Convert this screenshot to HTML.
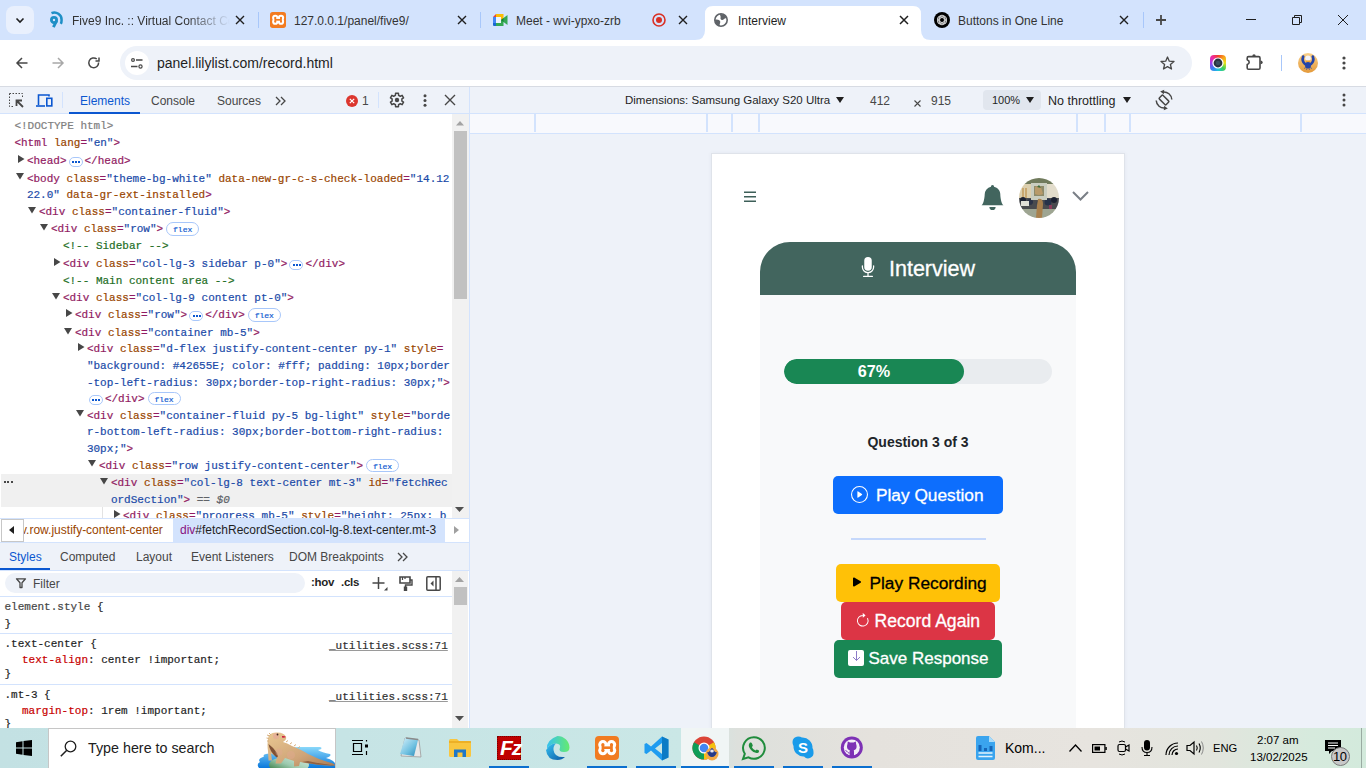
<!DOCTYPE html>
<html><head><meta charset="utf-8">
<style>
*{box-sizing:border-box;margin:0;padding:0}
html,body{width:1366px;height:768px;overflow:hidden;background:#fff;font-family:"Liberation Sans",sans-serif;position:relative}
.a{position:absolute}
.t{position:absolute;white-space:nowrap}
svg{position:absolute;overflow:visible}
/* tab strip */
#tabs{left:0;top:0;width:1366px;height:40px;background:#d3e3fd}
.tt{font-size:12px;color:#333;top:14px}
.sep{position:absolute;width:1px;height:16px;top:12px;background:#a8c7fa}
/* toolbar */
#tb{left:0;top:40px;width:1366px;height:46px;background:#fff;border-radius:8px 8px 0 0}
#omni{left:120px;top:46px;width:1072px;height:34px;border-radius:17px;background:#eef2f9}
#tbline{left:0;top:86px;width:1366px;height:1px;background:#d7dbe3}
/* devtools */
#dtl{left:0;top:87px;width:469px;height:641px;background:#fff}
#dttb{left:0;top:87px;width:469px;height:27px;background:#eef2f9;border-bottom:1px solid #d3e3fd}
#divider{left:469px;top:87px;width:1px;height:641px;background:#d3e3fd}
.dtab{font-size:12px;color:#474747;top:94px}
.code{font-family:"Liberation Mono",monospace;font-size:11px;line-height:17px;color:#881280}
.tag{color:#881280}
.an{color:#994500}
.av{color:#1a1aa6}
.cm{color:#236e25}
.gr{color:#808080}
/* right area */
#dvtb{left:470px;top:87px;width:896px;height:27px;background:#eef2f9;border-bottom:1px solid #d3e3fd}
#ruler{left:470px;top:114px;width:896px;height:20px;background:#f8f9fd;border-bottom:1px solid #d3e3fd}
#emu{left:470px;top:134px;width:896px;height:594px;background:#eef2f9}
#vp{left:711px;top:153px;width:413px;height:575px;background:#fff}
/* taskbar */
#task{left:0;top:728px;width:1366px;height:40px;background:linear-gradient(90deg,#c3e1e3 0%,#c6e4e5 25%,#cae7e6 50%,#dde0dc 54%,#e5e2dd 64%,#e7e4df 80%,#e2e5dd 89%,#d6eadd 96%,#d3eadc 100%)}

.cl{position:absolute;white-space:nowrap;font-family:"Liberation Mono",monospace;font-size:11px;line-height:17px;color:#1f1f1f;-webkit-text-stroke:0.2px currentColor}
.tg{color:#911a62}.an{color:#994500}.av{color:#1a4aa8}.cm{color:#236e25}
.ell{display:inline-block;position:relative;width:14px;height:10px;border:1px solid #a8c7fa;border-radius:5px;margin:0 2px 0 2px;vertical-align:-3px;background:#fff}
.ell i{position:absolute;top:3px;width:2px;height:2px;background:#0b57d0}
.ell i:nth-child(1){left:2.5px}.ell i:nth-child(2){left:5.5px}.ell i:nth-child(3){left:8.5px}
.flx{display:inline-block;width:33px;height:13.5px;border:1px solid #a8c7fa;border-radius:7px;margin-left:3px;vertical-align:0px;font-size:8px;line-height:13px;text-align:center;color:#0b57d0}
</style></head><body>
<div id="tabs" class="a"></div>

<!-- TAB STRIP -->
<div class="a" style="left:6px;top:6px;width:28px;height:28px;border-radius:8px;background:#e9f0fd"></div>
<svg style="left:14px;top:14px" width="12" height="12" viewBox="0 0 12 12"><path d="M2.5 4.5 L6 8 L9.5 4.5" fill="none" stroke="#1f1f1f" stroke-width="1.6"/></svg>
<!-- five9 -->
<svg style="left:50px;top:12px" width="13" height="16" viewBox="0 0 13 16"><path d="M1.5 1.2 A7.2 7.2 0 0 1 11.6 8 Q11.6 10.5 10.8 11.8" fill="none" stroke="#1e8fc6" stroke-width="2.5"/><circle cx="4" cy="8" r="2.6" fill="none" stroke="#1e8fc6" stroke-width="2.8"/><path d="M6.6 8.8 L3.4 15.2" stroke="#1e8fc6" stroke-width="2.8"/></svg>
<div class="t tt" style="left:72px;width:158px;overflow:hidden;-webkit-mask-image:linear-gradient(90deg,#000 72%,transparent 100%)">Five9 Inc. :: Virtual Contact Center</div>
<svg style="left:235px;top:15px" width="10" height="10" viewBox="0 0 10 10"><path d="M1 1L9 9M9 1L1 9" stroke="#1f1f1f" stroke-width="1.4"/></svg>
<div class="sep" style="left:258px"></div>
<!-- xampp -->
<svg style="left:270px;top:12px" width="16" height="16" viewBox="0 0 24 24"><rect x="0" y="0" width="24" height="24" rx="4" fill="#f37b20"/><g fill="#fff"><circle cx="7.9" cy="8.7" r="4.7"/><circle cx="16.5" cy="8.7" r="4.7"/><circle cx="7.9" cy="14.6" r="4.7"/><circle cx="16.5" cy="14.6" r="4.7"/><rect x="8" y="9" width="8.5" height="5.5"/></g><g fill="#f37b20"><circle cx="7.9" cy="8.7" r="1.6"/><circle cx="16.5" cy="8.7" r="1.6"/><circle cx="7.9" cy="14.6" r="1.6"/><circle cx="16.5" cy="14.6" r="1.6"/><rect x="6.6" y="8.7" width="2.6" height="5.9"/><rect x="15.2" y="8.7" width="2.6" height="5.9"/><rect x="7.9" y="10.4" width="8.6" height="2.6"/></g></svg>
<div class="t tt" style="left:294px">127.0.0.1/panel/five9/</div>
<svg style="left:457px;top:15px" width="10" height="10" viewBox="0 0 10 10"><path d="M1 1L9 9M9 1L1 9" stroke="#1f1f1f" stroke-width="1.4"/></svg>
<div class="sep" style="left:480px"></div>
<!-- meet -->
<svg style="left:493px;top:14px" width="15" height="12" viewBox="0 0 15 12">
<path d="M0 3 L3 0 L3 3Z" fill="#ea4335"/>
<rect x="3" y="0" width="7.5" height="3" fill="#fbbc04"/>
<path d="M8 3 L10.5 3 L10.5 6 L8 7.5Z" fill="#fbbc04"/>
<rect x="0" y="3" width="3" height="6" fill="#4285f4"/>
<path d="M0 9 L3 9 L3 12 L1 12 Q0 12 0 11Z" fill="#1967d2"/>
<rect x="3" y="9" width="7.5" height="3" fill="#34a853"/>
<path d="M8 6 L10.5 4 L14.5 1 L14.5 11 L10.5 8 L10.5 9 L8 9Z" fill="#34a853"/>
<path d="M8 6 L10.5 4 L10.5 8Z" fill="#188038"/>
<rect x="3" y="3" width="5" height="6" fill="#eef3fd"/>
</svg>
<div class="t tt" style="left:516px">Meet - wvi-ypxo-zrb</div>
<svg style="left:652px;top:13px" width="14" height="14" viewBox="0 0 14 14"><circle cx="7" cy="7" r="6" fill="none" stroke="#d93025" stroke-width="1.6"/><circle cx="7" cy="7" r="3" fill="#d93025"/></svg>
<svg style="left:678px;top:15px" width="10" height="10" viewBox="0 0 10 10"><path d="M1 1L9 9M9 1L1 9" stroke="#1f1f1f" stroke-width="1.4"/></svg>
<!-- active tab -->
<svg style="left:695px;top:6px" width="236" height="34" viewBox="0 0 236 34"><path d="M0 34 Q10 34 10 24 L10 8 Q10 0 18 0 L218 0 Q226 0 226 8 L226 24 Q226 34 236 34Z" fill="#fff"/></svg>
<svg style="left:714px;top:13px" width="14" height="14" viewBox="0 0 14 14"><circle cx="7" cy="7" r="6.2" fill="none" stroke="#5f6368" stroke-width="1.6"/><path d="M5.5 1.2 Q10 0.5 12.2 4 Q12 6 10.2 5.8 Q9 7.5 7.3 6.8 Q6 6 6.6 4.3 Q7 3 5.5 1.2Z" fill="#5f6368"/><path d="M0.9 6.8 Q3 6 5 7 Q6.8 8 6.2 9.8 Q5.2 11 6 13 Q1.5 12.5 0.9 6.8Z" fill="#5f6368"/></svg>
<div class="t tt" style="left:738px;color:#1f1f1f">Interview</div>
<svg style="left:899px;top:15px" width="10" height="10" viewBox="0 0 10 10"><path d="M1 1L9 9M9 1L1 9" stroke="#1f1f1f" stroke-width="1.5"/></svg>
<!-- openai tab -->
<svg style="left:934px;top:12px" width="16" height="16" viewBox="0 0 16 16"><circle cx="8" cy="8" r="8" fill="#000"/><g fill="none" stroke="#c8c8c8" stroke-width="1.1"><rect x="5.6" y="3.3" width="4.8" height="9.4" rx="2.4"/><rect x="5.6" y="3.3" width="4.8" height="9.4" rx="2.4" transform="rotate(60 8 8)"/><rect x="5.6" y="3.3" width="4.8" height="9.4" rx="2.4" transform="rotate(120 8 8)"/></g><circle cx="8" cy="8" r="1" fill="#000"/></svg>
<div class="t tt" style="left:958px">Buttons in One Line</div>
<svg style="left:1119px;top:15px" width="10" height="10" viewBox="0 0 10 10"><path d="M1 1L9 9M9 1L1 9" stroke="#1f1f1f" stroke-width="1.4"/></svg>
<div class="sep" style="left:1143px"></div>
<svg style="left:1156px;top:15px" width="10" height="10" viewBox="0 0 10 10"><path d="M5 0V10M0 5H10" stroke="#474747" stroke-width="1.8"/></svg>
<svg style="left:1246px;top:19px" width="10" height="2" viewBox="0 0 10 2"><path d="M0 .5H10" stroke="#1f1f1f" stroke-width="1"/></svg>
<svg style="left:1292px;top:15px" width="10" height="10" viewBox="0 0 10 10"><path d="M.5 2.5H7.5V9.5H.5Z M2.5 2.5V.5H9.5V7.5H7.5" fill="none" stroke="#1f1f1f" stroke-width="1"/></svg>
<svg style="left:1338px;top:15px" width="10" height="10" viewBox="0 0 10 10"><path d="M0 0L10 10M10 0L0 10" stroke="#1f1f1f" stroke-width="1"/></svg>
<div id="tb" class="a"></div>
<div id="omni" class="a"></div>

<!-- TOOLBAR CONTENT -->
<svg style="left:16px;top:57px" width="12" height="12" viewBox="0 0 12 12"><path d="M11.5 6H1.2M6 1L1 6L6 11" fill="none" stroke="#474747" stroke-width="1.5"/></svg>
<svg style="left:52px;top:57px" width="12" height="12" viewBox="0 0 12 12"><path d="M.5 6H10.8M6 1L11 6L6 11" fill="none" stroke="#a8a8a8" stroke-width="1.5"/></svg>
<svg style="left:88px;top:57px" width="12" height="12" viewBox="0 0 12 12"><path d="M10.6 5.5 A4.9 4.9 0 1 1 8.8 2" fill="none" stroke="#474747" stroke-width="1.5"/><path d="M7.5 1.5H11V-2" fill="none" stroke="#474747" stroke-width="1.5" transform="translate(0,2.5)"/></svg>
<div class="a" style="left:125px;top:51px;width:24px;height:24px;border-radius:12px;background:#fff"></div>
<svg style="left:131px;top:58px" width="12" height="11" viewBox="0 0 12 11"><circle cx="2" cy="2" r="1.4" fill="none" stroke="#474747" stroke-width="1.2"/><path d="M5 2H11.5M0 8.5H6.5" stroke="#474747" stroke-width="1.3"/><circle cx="9.5" cy="8.5" r="1.6" fill="none" stroke="#474747" stroke-width="1.2"/></svg>
<div class="t" style="left:157px;top:55px;font-size:14px;color:#1f1f1f">panel.lilylist.com/record.html</div>
<svg style="left:1160px;top:56px" width="15" height="14" viewBox="0 0 15 14"><path d="M7.5 1 L9.3 5.2 L14 5.5 L10.4 8.5 L11.5 13 L7.5 10.6 L3.5 13 L4.6 8.5 L1 5.5 L5.7 5.2Z" fill="none" stroke="#474747" stroke-width="1.3" stroke-linejoin="round"/></svg>
<div class="a" style="left:1210px;top:55px;width:16px;height:16px;border-radius:4px;background:conic-gradient(from 0deg,#f0402a,#f7a21b,#e8e21a,#3ccf5a,#1ec6e0,#3a7df0,#a23cf0,#f02aa0,#f0402a)"></div><svg style="left:1210px;top:55px" width="16" height="16" viewBox="0 0 16 16"><circle cx="8" cy="8" r="5.6" fill="#fff"/><circle cx="8" cy="8" r="4.4" fill="#2b3440"/><circle cx="8" cy="8" r="2.2" fill="#3a5060"/></svg>
<svg style="left:1246px;top:54px" width="18" height="17" viewBox="0 0 18 17"><path d="M2.5 2.6 H12.7 Q14 2.6 14 3.9 V14 Q14 15.3 12.7 15.3 H2.5 Q1.2 15.3 1.2 14 V10.6 Q3.2 9.8 3.2 8.2 Q3.2 6.6 1.2 5.8 V3.9 Q1.2 2.6 2.5 2.6Z" fill="none" stroke="#474747" stroke-width="1.6" stroke-linejoin="round"/><path d="M6.3 2.2 Q6.3 0.2 8 0.2 Q9.7 0.2 9.7 2.2Z" fill="#474747"/><path d="M14.5 6.6 Q16.7 6.6 16.7 8.4 Q16.7 10.2 14.5 10.2Z" fill="#474747"/></svg>
<div class="a" style="left:1281px;top:55px;width:1px;height:16px;background:#a8c7fa"></div>
<svg style="left:1298px;top:53px" width="20" height="20" viewBox="0 0 20 20"><defs><linearGradient id="avo" x1="0" y1="0" x2="0" y2="1"><stop offset="0" stop-color="#f9d08a"/><stop offset="1" stop-color="#e49a3a"/></linearGradient></defs><circle cx="10" cy="10" r="10" fill="url(#avo)"/><path d="M5.2 3.5 Q3.5 8 7 11 M14.8 3.5 Q16.5 8 13 11" fill="none" stroke="#2444a8" stroke-width="2.6" stroke-linecap="round"/><ellipse cx="10" cy="5.2" rx="2.8" ry="2.6" fill="#f4f4f8"/><path d="M7.8 7.6 H12.2 L12 9.2 H8Z" fill="#f0a030"/><ellipse cx="10" cy="12.2" rx="3" ry="3.2" fill="#2444a8"/><path d="M7.5 14 L6.5 16 M12.5 14 L13.5 16 M9 15 L8.5 17 M11 15 L11.5 17" stroke="#2444a8" stroke-width=".6"/></svg>
<svg style="left:1342px;top:56px" width="4" height="14" viewBox="0 0 4 14"><circle cx="2" cy="2" r="1.6" fill="#474747"/><circle cx="2" cy="7" r="1.6" fill="#474747"/><circle cx="2" cy="12" r="1.6" fill="#474747"/></svg>
<div id="tbline" class="a"></div>
<div id="dtl" class="a"></div>
<div id="dttb" class="a"></div>
<!-- DOM TREE -->
<div class="a" style="left:0;top:115px;width:452px;height:403px;overflow:hidden">
<div class="a" style="left:1px;top:359px;width:451px;height:33px;background:#f0f0f0"></div>
<div class="a" style="left:3.5px;top:366px;width:2px;height:2px;background:#474747"></div><div class="a" style="left:7px;top:366px;width:2px;height:2px;background:#474747"></div><div class="a" style="left:10.5px;top:366px;width:2px;height:2px;background:#474747"></div>
<div class="a" style="left:102px;top:392px;width:1px;height:11px;background:#e3e3e3"></div>
<div class="cl" style="left:14.4px;top:3.1px"><span style="color:#808080">&lt;!DOCTYPE html&gt;</span></div>
<div class="cl" style="left:14.4px;top:20.1px"><span class="tg">&lt;html</span> <span class="an">lang</span><span class="tg">=</span><span class="av">&quot;en&quot;</span><span class="tg">&gt;</span></div>
<div class="cl" style="left:26.9px;top:37.9px"><span class="tg">&lt;head&gt;</span><span class="ell"><i></i><i></i><i></i></span><span class="tg">&lt;/head&gt;</span></div>
<svg style="left:17.9px;top:39.8px" width="7" height="8" viewBox="0 0 7 8"><path d="M0 0L6.5 4L0 8Z" fill="#474747"/></svg>
<div class="cl" style="left:26.9px;top:55.5px"><span class="tg">&lt;body</span> <span class="an">class</span><span class="tg">=</span><span class="av">&quot;theme-bg-white&quot;</span> <span class="an">data-new-gr-c-s-check-loaded</span><span class="tg">=</span><span class="av">&quot;14.12</span></div>
<svg style="left:16.3px;top:57.9px" width="8" height="7" viewBox="0 0 8 7"><path d="M0 0H8L4 6.5Z" fill="#474747"/></svg>
<div class="cl" style="left:26.9px;top:71.6px"><span class="av">22.0&quot;</span> <span class="an">data-gr-ext-installed</span><span class="tg">&gt;</span></div>
<div class="cl" style="left:38.9px;top:89.1px"><span class="tg">&lt;div</span> <span class="an">class</span><span class="tg">=</span><span class="av">&quot;container-fluid&quot;</span><span class="tg">&gt;</span></div>
<svg style="left:28.3px;top:91.5px" width="8" height="7" viewBox="0 0 8 7"><path d="M0 0H8L4 6.5Z" fill="#474747"/></svg>
<div class="cl" style="left:50.9px;top:106.1px"><span class="tg">&lt;div</span> <span class="an">class</span><span class="tg">=</span><span class="av">&quot;row&quot;</span><span class="tg">&gt;</span><span class="flx">flex</span></div>
<svg style="left:40.3px;top:108.5px" width="8" height="7" viewBox="0 0 8 7"><path d="M0 0H8L4 6.5Z" fill="#474747"/></svg>
<div class="cl" style="left:62.9px;top:123.3px"><span class="cm">&lt;!-- Sidebar --&gt;</span></div>
<div class="cl" style="left:62.9px;top:141.0px"><span class="tg">&lt;div</span> <span class="an">class</span><span class="tg">=</span><span class="av">&quot;col-lg-3 sidebar p-0&quot;</span><span class="tg">&gt;</span><span class="ell"><i></i><i></i><i></i></span><span class="tg">&lt;/div&gt;</span></div>
<svg style="left:53.9px;top:142.9px" width="7" height="8" viewBox="0 0 7 8"><path d="M0 0L6.5 4L0 8Z" fill="#474747"/></svg>
<div class="cl" style="left:62.9px;top:158.1px"><span class="cm">&lt;!-- Main content area --&gt;</span></div>
<div class="cl" style="left:62.9px;top:175.1px"><span class="tg">&lt;div</span> <span class="an">class</span><span class="tg">=</span><span class="av">&quot;col-lg-9 content pt-0&quot;</span><span class="tg">&gt;</span></div>
<svg style="left:52.3px;top:177.5px" width="8" height="7" viewBox="0 0 8 7"><path d="M0 0H8L4 6.5Z" fill="#474747"/></svg>
<div class="cl" style="left:74.9px;top:192.4px"><span class="tg">&lt;div</span> <span class="an">class</span><span class="tg">=</span><span class="av">&quot;row&quot;</span><span class="tg">&gt;</span><span class="ell"><i></i><i></i><i></i></span><span class="tg">&lt;/div&gt;</span><span class="flx">flex</span></div>
<svg style="left:65.9px;top:194.3px" width="7" height="8" viewBox="0 0 7 8"><path d="M0 0L6.5 4L0 8Z" fill="#474747"/></svg>
<div class="cl" style="left:74.9px;top:210.1px"><span class="tg">&lt;div</span> <span class="an">class</span><span class="tg">=</span><span class="av">&quot;container mb-5&quot;</span><span class="tg">&gt;</span></div>
<svg style="left:64.3px;top:212.5px" width="8" height="7" viewBox="0 0 8 7"><path d="M0 0H8L4 6.5Z" fill="#474747"/></svg>
<div class="cl" style="left:86.9px;top:226.3px"><span class="tg">&lt;div</span> <span class="an">class</span><span class="tg">=</span><span class="av">&quot;d-flex justify-content-center py-1&quot;</span> <span class="an">style</span><span class="tg">=</span></div>
<svg style="left:77.9px;top:228.2px" width="7" height="8" viewBox="0 0 7 8"><path d="M0 0L6.5 4L0 8Z" fill="#474747"/></svg>
<div class="cl" style="left:86.9px;top:242.7px"><span class="av">&quot;background: #42655E; color: #fff; padding: 10px;border</span></div>
<div class="cl" style="left:86.9px;top:259.9px"><span class="av">-top-left-radius: 30px;border-top-right-radius: 30px;&quot;</span><span class="tg">&gt;</span></div>
<div class="cl" style="left:86.9px;top:275.5px"><span class="ell"><i></i><i></i><i></i></span><span class="tg">&lt;/div&gt;</span><span class="flx">flex</span></div>
<div class="cl" style="left:86.9px;top:292.7px"><span class="tg">&lt;div</span> <span class="an">class</span><span class="tg">=</span><span class="av">&quot;container-fluid py-5 bg-light&quot;</span> <span class="an">style</span><span class="tg">=</span><span class="av">&quot;borde</span></div>
<svg style="left:76.3px;top:295.1px" width="8" height="7" viewBox="0 0 8 7"><path d="M0 0H8L4 6.5Z" fill="#474747"/></svg>
<div class="cl" style="left:86.9px;top:309.1px"><span class="av">r-bottom-left-radius: 30px;border-bottom-right-radius:</span></div>
<div class="cl" style="left:86.9px;top:325.5px"><span class="av">30px;&quot;</span><span class="tg">&gt;</span></div>
<div class="cl" style="left:98.9px;top:342.9px"><span class="tg">&lt;div</span> <span class="an">class</span><span class="tg">=</span><span class="av">&quot;row justify-content-center&quot;</span><span class="tg">&gt;</span><span class="flx">flex</span></div>
<svg style="left:88.3px;top:345.3px" width="8" height="7" viewBox="0 0 8 7"><path d="M0 0H8L4 6.5Z" fill="#474747"/></svg>
<div class="cl" style="left:110.9px;top:360.1px"><span class="tg">&lt;div</span> <span class="an">class</span><span class="tg">=</span><span class="av">&quot;col-lg-8 text-center mt-3&quot;</span> <span class="an">id</span><span class="tg">=</span><span class="av">&quot;fetchRec</span></div>
<svg style="left:100.3px;top:362.5px" width="8" height="7" viewBox="0 0 8 7"><path d="M0 0H8L4 6.5Z" fill="#474747"/></svg>
<div class="cl" style="left:110.9px;top:376.6px"><span class="av">ordSection&quot;</span><span class="tg">&gt;</span> <span style="color:#5f6368;font-style:italic">== $0</span></div>
<div class="cl" style="left:122.9px;top:392.9px"><span class="tg">&lt;div</span> <span class="an">class</span><span class="tg">=</span><span class="av">&quot;progress mb-5&quot;</span> <span class="an">style</span><span class="tg">=</span><span class="av">&quot;height: 25px; b</span></div>
<svg style="left:113.9px;top:394.8px" width="7" height="8" viewBox="0 0 7 8"><path d="M0 0L6.5 4L0 8Z" fill="#474747"/></svg>

</div>
<!-- dom scrollbar -->
<div class="a" style="left:452px;top:114px;width:17px;height:404px;background:#f1f1f1"></div>
<svg style="left:456px;top:121px" width="8" height="5" viewBox="0 0 8 5"><path d="M0 4.5H8L4 0Z" fill="#a3a3a3"/></svg>
<div class="a" style="left:454px;top:131px;width:13px;height:168px;background:#c1c1c1"></div>
<svg style="left:455px;top:507px" width="9" height="6" viewBox="0 0 9 6"><path d="M0 0H9L4.5 5Z" fill="#505050"/></svg>


<!-- BREADCRUMB -->
<div class="a" style="left:0;top:518px;width:469px;height:1px;background:#d3e3fd"></div>
<div class="a" style="left:0;top:519px;width:469px;height:23px;background:#fff"></div>
<div class="a" style="left:1px;top:519px;width:23px;height:23px;border:1px solid #c7c7c7;background:#fff"></div>
<svg style="left:9px;top:526px" width="5" height="8" viewBox="0 0 5 8"><path d="M5 0V8L0 4Z" fill="#1f1f1f"/></svg>
<div class="a" style="left:24px;top:519px;width:149px;height:23px;overflow:hidden">
<div class="t" style="left:-3px;top:4px;font-size:12px;color:#994500">v.row.justify-content-center</div>
</div>
<div class="a" style="left:173px;top:519px;width:272px;height:23px;background:#d3e3fd"></div>
<div class="t" style="left:180px;top:523px;font-size:12px;color:#1f1f1f"><span style="color:#881280">div</span>#fetchRecordSection.col-lg-8.text-center.mt-3</div>
<div class="a" style="left:445px;top:519px;width:23px;height:23px;background:#fff"></div>
<svg style="left:454px;top:526px" width="5" height="8" viewBox="0 0 5 8"><path d="M0 0V8L5 4Z" fill="#a0a0a0"/></svg>
<div class="a" style="left:0;top:542px;width:469px;height:1px;background:#d3e3fd"></div>
<!-- STYLES TABS -->
<div class="a" style="left:0;top:543px;width:469px;height:27px;background:#eef2f9"></div>
<div class="t dtab" style="left:9px;top:550px;color:#0b57d0">Styles</div>
<div class="a" style="left:0;top:568px;width:50px;height:2px;background:#0b57d0"></div>
<div class="t dtab" style="left:60px;top:550px">Computed</div>
<div class="t dtab" style="left:136px;top:550px">Layout</div>
<div class="t dtab" style="left:191px;top:550px">Event Listeners</div>
<div class="t dtab" style="left:289px;top:550px">DOM Breakpoints</div>
<svg style="left:397px;top:552px" width="12" height="10" viewBox="0 0 12 10"><path d="M1 1L5 5L1 9M6 1L10 5L6 9" fill="none" stroke="#474747" stroke-width="1.3"/></svg>
<div class="a" style="left:0;top:570px;width:469px;height:1px;background:#d3e3fd"></div>
<!-- FILTER -->
<div class="a" style="left:5px;top:573px;width:300px;height:20px;border-radius:10px;background:#eef2f9"></div>
<svg style="left:16px;top:578px" width="10" height="10" viewBox="0 0 10 10"><path d="M.5 .8H9.5L6 4.8V9.5H4V4.8Z" fill="none" stroke="#474747" stroke-width="1.3" stroke-linejoin="round"/></svg>
<div class="t" style="left:33px;top:577px;font-size:12px;color:#474747">Filter</div>
<div class="t" style="left:311px;top:576px;font-size:11.5px;color:#1f1f1f;font-weight:bold;letter-spacing:-0.3px">:hov</div>
<div class="t" style="left:341px;top:576px;font-size:11.5px;color:#1f1f1f;font-weight:bold;letter-spacing:-0.3px">.cls</div>
<svg style="left:372px;top:576px" width="17" height="15" viewBox="0 0 17 15"><path d="M6.5 1V13M.5 7H12.5" stroke="#474747" stroke-width="1.5"/><path d="M15.5 11V14.5H12Z" fill="#474747"/></svg>
<svg style="left:399px;top:576px" width="14" height="15" viewBox="0 0 14 15"><path d="M1 1H11V7H1Z" fill="none" stroke="#474747" stroke-width="1.6"/><path d="M3.5 1V4M6 1V3" stroke="#474747" stroke-width="1.2"/><path d="M11 4H13V9H6.5V11" fill="none" stroke="#474747" stroke-width="1.4"/><rect x="4.8" y="10.5" width="3.4" height="4.5" fill="#474747"/></svg>
<svg style="left:426px;top:576px" width="15" height="15" viewBox="0 0 15 15"><rect x=".8" y=".8" width="13.4" height="13.4" rx="1" fill="none" stroke="#474747" stroke-width="1.5"/><path d="M10 1V14" stroke="#474747" stroke-width="1.5"/><path d="M7.5 4.5V10.5L4.5 7.5Z" fill="#474747"/></svg>
<div class="a" style="left:452px;top:571px;width:16px;height:157px;background:#f1f1f1"></div>
<svg style="left:455px;top:577px" width="9" height="6" viewBox="0 0 9 6"><path d="M0 5H9L4.5 0Z" fill="#a3a3a3"/></svg>
<div class="a" style="left:454px;top:587px;width:13px;height:18px;background:#c1c1c1"></div>
<svg style="left:455px;top:716px" width="9" height="6" viewBox="0 0 9 6"><path d="M0 0H9L4.5 5Z" fill="#505050"/></svg>
<div class="a" style="left:0;top:596px;width:452px;height:1px;background:#d3e3fd"></div>
<!-- STYLES CONTENT -->
<div class="cl" style="left:4.5px;top:598.6px"><span style="color:#474747">element.style</span> {</div>
<div class="cl" style="left:4.5px;top:615.5px">}</div>
<div class="a" style="left:0;top:633px;width:452px;height:1px;background:#d3e3fd"></div>
<div class="cl" style="left:4.5px;top:635.8px">.text-center {</div>
<div class="cl" style="left:329px;top:637.8px;text-decoration:underline;text-decoration-color:#9a9a9a;color:#303030">_utilities.scss:71</div>
<div class="cl" style="left:22px;top:651.6px"><span style="color:#c80000">text-align</span>: center !important;</div>
<div class="cl" style="left:4.5px;top:665.7px">}</div>
<div class="a" style="left:0;top:684px;width:452px;height:1px;background:#d3e3fd"></div>
<div class="cl" style="left:4.5px;top:686.8px">.mt-3 {</div>
<div class="cl" style="left:329px;top:689.2px;text-decoration:underline;text-decoration-color:#9a9a9a;color:#303030">_utilities.scss:71</div>
<div class="cl" style="left:22px;top:702.6px"><span style="color:#c80000">margin-top</span>: 1rem !important;</div>
<div class="cl" style="left:4.5px;top:716px">}</div>
<div id="divider" class="a"></div>

<!-- DEVTOOLS TOOLBAR -->
<svg style="left:9px;top:93px" width="15" height="15" viewBox="0 0 15 15"><path d="M.5 .5H13.5V5.5 M.5 .5V13.5H5.5" fill="none" stroke="#474747" stroke-width="1" stroke-dasharray="1.5 1.5"/><path d="M14 14L7.5 7.5M7.5 13V7.5H13" fill="none" stroke="#474747" stroke-width="1.8"/></svg>
<svg style="left:36px;top:94px" width="17" height="13" viewBox="0 0 17 13"><path d="M2.5 11V1H13V2.5" fill="none" stroke="#0b57d0" stroke-width="1.6"/><path d="M0 12H9" stroke="#0b57d0" stroke-width="1.6"/><rect x="10.8" y="4.3" width="5" height="7.6" fill="none" stroke="#0b57d0" stroke-width="1.6"/></svg>
<div class="a" style="left:62px;top:92px;width:1px;height:16px;background:#d3e3fd"></div>
<div class="t dtab" style="left:80px;color:#0b57d0">Elements</div>
<div class="a" style="left:69px;top:112px;width:71px;height:2px;background:#0b57d0"></div>
<div class="t dtab" style="left:151px">Console</div>
<div class="t dtab" style="left:217px">Sources</div>
<svg style="left:275px;top:96px" width="12" height="10" viewBox="0 0 12 10"><path d="M1 1L5 5L1 9M6 1L10 5L6 9" fill="none" stroke="#474747" stroke-width="1.3"/></svg>
<svg style="left:346px;top:95px" width="12" height="12" viewBox="0 0 12 12"><circle cx="6" cy="6" r="6" fill="#dc362e"/><path d="M3.8 3.8L8.2 8.2M8.2 3.8L3.8 8.2" stroke="#fff" stroke-width="1.2"/></svg>
<div class="t dtab" style="left:362px">1</div>
<div class="a" style="left:378px;top:92px;width:1px;height:16px;background:#d3e3fd"></div>
<svg style="left:389px;top:92px" width="16" height="16" viewBox="0 0 16 16"><path d="M6.57 1.25 L9.43 1.25 L9.55 3.24 L11.35 4.28 L13.13 3.38 L14.56 5.87 L12.89 6.96 L12.89 9.04 L14.56 10.13 L13.13 12.62 L11.35 11.72 L9.55 12.76 L9.43 14.75 L6.57 14.75 L6.45 12.76 L4.65 11.72 L2.87 12.62 L1.44 10.13 L3.11 9.04 L3.11 6.96 L1.44 5.87 L2.87 3.38 L4.65 4.28 L6.45 3.24Z" fill="none" stroke="#474747" stroke-width="1.5" stroke-linejoin="round"/><circle cx="8" cy="8" r="2.2" fill="#474747"/></svg>
<svg style="left:423px;top:94px" width="4" height="13" viewBox="0 0 4 13"><circle cx="2" cy="1.8" r="1.5" fill="#474747"/><circle cx="2" cy="6.5" r="1.5" fill="#474747"/><circle cx="2" cy="11.2" r="1.5" fill="#474747"/></svg>
<svg style="left:445px;top:95px" width="10" height="10" viewBox="0 0 10 10"><path d="M0 0L10 10M10 0L0 10" stroke="#474747" stroke-width="1.4"/></svg>
<div id="dvtb" class="a"></div>
<div id="ruler" class="a"></div>
<div id="emu" class="a"></div>

<!-- DEVICE TOOLBAR -->
<div class="t" style="left:625px;top:94px;font-size:11.5px;color:#1f1f1f">Dimensions: Samsung Galaxy S20 Ultra</div>
<svg style="left:836px;top:97px" width="8" height="7" viewBox="0 0 8 7"><path d="M0 0H8L4 6Z" fill="#1f1f1f"/></svg>
<div class="t" style="left:870px;top:94px;font-size:12px;color:#474747">412</div>
<svg style="left:914px;top:100px" width="7" height="7" viewBox="0 0 7 7"><path d="M.5 .5L6.5 6.5M6.5 .5L.5 6.5" stroke="#474747" stroke-width="1.1"/></svg>
<div class="t" style="left:931px;top:94px;font-size:12px;color:#474747">915</div>
<div class="a" style="left:983px;top:90px;width:58px;height:20px;border-radius:4px;background:#e1e6ee"></div>
<div class="t" style="left:992px;top:94px;font-size:11px;color:#1f1f1f">100%</div>
<svg style="left:1026px;top:97px" width="8" height="7" viewBox="0 0 8 7"><path d="M0 0H8L4 6Z" fill="#1f1f1f"/></svg>
<div class="t" style="left:1048px;top:94px;font-size:12.5px;color:#1f1f1f">No throttling</div>
<svg style="left:1123px;top:97px" width="8" height="7" viewBox="0 0 8 7"><path d="M0 0H8L4 6Z" fill="#1f1f1f"/></svg>
<svg style="left:1154px;top:90px" width="20" height="20" viewBox="0 0 20 20"><rect x="7.4" y="5.2" width="5.2" height="9.6" rx="1" transform="rotate(-45 10 10)" fill="none" stroke="#474747" stroke-width="1.5"/><path d="M8.8 2 A8 8 0 0 1 17.8 9.5" fill="none" stroke="#474747" stroke-width="1.5"/><path d="M6.2 1.6 L10.2 -0.2 L9.8 4.2Z" fill="#474747"/><path d="M11.2 18 A8 8 0 0 1 2.2 10.5" fill="none" stroke="#474747" stroke-width="1.5"/><path d="M13.8 18.4 L9.8 20.2 L10.2 15.8Z" fill="#474747"/></svg>
<svg style="left:1342px;top:93px" width="4" height="14" viewBox="0 0 4 14"><circle cx="2" cy="2" r="1.5" fill="#474747"/><circle cx="2" cy="7" r="1.5" fill="#474747"/><circle cx="2" cy="12" r="1.5" fill="#474747"/></svg>
<!-- RULER LINES -->
<div class="a" style="left:534px;top:114px;width:2px;height:18px;background:#d3e3fd"></div>
<div class="a" style="left:706px;top:114px;width:2px;height:18px;background:#d3e3fd"></div>
<div class="a" style="left:731px;top:114px;width:2px;height:18px;background:#d3e3fd"></div>
<div class="a" style="left:758px;top:114px;width:2px;height:18px;background:#d3e3fd"></div>
<div class="a" style="left:1076px;top:114px;width:2px;height:18px;background:#d3e3fd"></div>
<div class="a" style="left:1104px;top:114px;width:2px;height:18px;background:#d3e3fd"></div>
<div class="a" style="left:1129px;top:114px;width:2px;height:18px;background:#d3e3fd"></div>
<div class="a" style="left:1300px;top:114px;width:2px;height:18px;background:#d3e3fd"></div>
<!-- PAGE CONTENT -->
<div class="a" style="left:712px;top:154px;width:412px;height:574px;background:#fff;overflow:hidden;box-shadow:0 0 0 1px #dfe3ea,0 0 4px 1px rgba(60,70,90,.06)"><div class="a" style="left:-1px;top:-1px;width:414px;height:576px">
  <!-- hamburger -->
  <svg style="left:33px;top:36px" width="12" height="14" viewBox="0 0 12 14"><path d="M0 3.2H12M0 7.7H12M0 12.2H12" stroke="#3d5f58" stroke-width="1.6"/></svg>
  <!-- bell -->
  <svg style="left:268.5px;top:32px" width="25" height="25" viewBox="0 0 16 16"><path fill="#42655e" d="M8 16a2 2 0 0 0 2-2H6a2 2 0 0 0 2 2m.995-14.901a1 1 0 1 0-1.990 0A5 5 0 0 0 3 6c0 1.098-.5 6-2 7h14c-1.5-1-2-5.902-2-7 0-2.420-1.720-4.440-4.005-4.901"/></svg>
  <!-- avatar -->
  <svg style="left:308px;top:25px" width="40" height="40" viewBox="0 0 40 40"><defs><clipPath id="avc"><circle cx="20" cy="20" r="20"/></clipPath><filter id="avb" x="-10%" y="-10%" width="120%" height="120%"><feGaussianBlur stdDeviation="0.6"/></filter></defs>
  <g clip-path="url(#avc)"><g filter="url(#avb)">
  <rect width="40" height="40" fill="#b8b49c"/>
  <rect x="0" y="0" width="40" height="8" fill="#6f7a5c"/>
  <rect x="0" y="6" width="14" height="16" fill="#dccfae"/>
  <rect x="3" y="10" width="2" height="10" fill="#c9a870"/><rect x="6" y="10" width="2" height="10" fill="#c9a870"/>
  <rect x="26" y="6" width="14" height="14" fill="#e2dccb"/>
  <rect x="0" y="20" width="40" height="12" fill="#4a4c50"/>
  <circle cx="4" cy="22" r="3" fill="#1f2433"/><circle cx="11" cy="24" r="3" fill="#2b3246"/><circle cx="29" cy="24" r="3.5" fill="#27304a"/><circle cx="35" cy="22" r="3" fill="#1e2230"/><circle cx="20" cy="25" r="2.5" fill="#333a4a"/>
  <rect x="2" y="23" width="8" height="5" fill="#e0e0d8"/>
  <rect x="0" y="31" width="40" height="9" fill="#9ea592"/>
  <rect x="12" y="5" width="16" height="17" fill="#c9cdc0"/>
  <rect x="15" y="8" width="10" height="10" fill="#8d8a6a"/>
  <path d="M16 9 Q19 7 22 9 L24 16 Q20 18 16 16Z" fill="#b89a6a"/>
  <path d="M18 9 L20 7 L22 10Z" fill="#3c6a3a"/>
  <path d="M19 21 Q24 20 24 26 L23 40 L17 40 L18 27Z" fill="#a8804e"/>
  <rect x="30" y="27" width="3" height="4" fill="#8a3a5a"/>
  </g></g></svg>
  <!-- chevron -->
  <svg style="left:361px;top:38px" width="17" height="10" viewBox="0 0 17 10"><path d="M1 1L8.5 8.5L16 1" fill="none" stroke="#7a7f86" stroke-width="2"/></svg>
  <!-- card header -->
  <div class="a" style="left:49px;top:89px;width:316px;height:53px;background:#42655e;border-radius:30px 30px 0 0"></div>
  <svg style="left:147px;top:103.5px" width="20" height="20" viewBox="0 0 16 16"><path fill="#fff" d="M5 3a3 3 0 0 1 6 0v5a3 3 0 0 1-6 0z"/><path fill="#fff" d="M3.5 6.5A.5.5 0 0 1 4 7v1a4 4 0 0 0 8 0V7a.5.5 0 0 1 1 0v1a5 5 0 0 1-4.5 4.975V15h3a.5.5 0 0 1 0 1h-7a.5.5 0 0 1 0-1h3v-2.025A5 5 0 0 1 3 8V7a.5.5 0 0 1 .5-.5"/></svg>
  <div class="t" style="left:178px;top:104px;font-size:21.5px;-webkit-text-stroke:0.3px currentColor;color:#fff">Interview</div>
  <!-- card body -->
  <div class="a" style="left:49px;top:142px;width:316px;height:440px;background:#f8f9fa"></div>
  <!-- progress -->
  <div class="a" style="left:73px;top:206px;width:268px;height:25px;border-radius:12.5px;background:#e9ecef;overflow:hidden">
    <div class="a" style="left:0;top:0;width:180px;height:25px;background:#198754;border-radius:12.5px"></div>
  </div>
  <div class="a" style="left:790px;top:0;width:0;height:0"></div>
  <div class="t" style="left:73px;top:209px;width:180px;text-align:center;font-size:16.2px;font-weight:bold;color:#fff">67%</div>
  <div class="t" style="left:49px;top:281px;width:316px;text-align:center;font-size:14px;font-weight:bold;color:#212529">Question 3 of 3</div>
  <!-- play question -->
  <div class="a" style="left:122px;top:323px;width:170px;height:38px;border-radius:5px;background:#0d6efd"></div>
  <svg style="left:140px;top:332.5px" width="17" height="17" viewBox="0 0 16 16"><path fill="#fff" d="M8 15A7 7 0 1 1 8 1a7 7 0 0 1 0 14m0 1A8 8 0 1 0 8 0a8 8 0 0 0 0 16"/><path fill="#fff" d="M6.271 5.055a.5.5 0 0 1 .52.038l3.5 2.5a.5.5 0 0 1 0 .814l-3.5 2.5A.5.5 0 0 1 6 10.5v-5a.5.5 0 0 1 .271-.445"/></svg>
  <div class="t" style="left:165px;top:332px;font-size:17.3px;-webkit-text-stroke:0.3px currentColor;color:#fff">Play Question</div>
  <!-- divider -->
  <div class="a" style="left:140px;top:384.5px;width:134.5px;height:2px;background:#c5d8fb"></div>
  <!-- play recording -->
  <div class="a" style="left:125px;top:411px;width:164px;height:38px;border-radius:5px;background:#ffc107"></div>
  <svg style="left:138px;top:420.5px" width="16" height="16" viewBox="0 0 16 16"><path fill="#000" d="m11.596 8.697-6.363 3.692c-.54.313-1.233-.066-1.233-.697V4.308c0-.63.692-1.01 1.233-.696l6.363 3.692a.802.802 0 0 1 0 1.393"/></svg>
  <div class="t" style="left:158.5px;top:420px;font-size:17.3px;-webkit-text-stroke:0.3px currentColor;color:#000">Play Recording</div>
  <!-- record again -->
  <div class="a" style="left:130px;top:449px;width:154px;height:38px;border-radius:5px;background:#dc3545"></div>
  <svg style="left:143.5px;top:460px" width="15.5" height="15.5" viewBox="0 0 16 16"><path fill="#fff" fill-rule="evenodd" d="M8 3a5 5 0 1 0 4.546 2.914.5.5 0 0 1 .908-.417A6 6 0 1 1 8 2z"/><path fill="#fff" d="M8 4.466V.534a.25.25 0 0 1 .41-.192l2.360 1.966c.12.1.12.284 0 .384L8.41 4.658A.25.25 0 0 1 8 4.466"/></svg>
  <div class="t" style="left:163.5px;top:458px;font-size:17.6px;-webkit-text-stroke:0.3px currentColor;color:#fff">Record Again</div>
  <!-- save response -->
  <div class="a" style="left:123px;top:487px;width:168px;height:38px;border-radius:5px;background:#198754"></div>
  <div class="a" style="left:136.5px;top:497px;width:16.5px;height:16px;border-radius:2px;background:#fff"></div>
  <svg style="left:140.5px;top:498px" width="9" height="11" viewBox="0 0 9 11"><path d="M4.5 0V9.5M1 6L4.5 9.5L8 6" fill="none" stroke="#8d7bc8" stroke-width="1"/></svg>
  <div class="t" style="left:157.5px;top:496px;font-size:17px;-webkit-text-stroke:0.3px currentColor;color:#fff">Save Response</div>
</div></div>

<div id="task" class="a"></div>

<!-- TASKBAR CONTENT -->
<svg style="left:16px;top:740px" width="16" height="16" viewBox="0 0 16 16"><path d="M0 2.2L6.5 1.3V7.5H0Z M7.5 1.1L16 0V7.5H7.5Z M0 8.5H6.5V14.7L0 13.8Z M7.5 8.5H16V16L7.5 14.9Z" fill="#000"/></svg>
<div class="a" style="left:48px;top:728px;width:288px;height:40px;background:#fff;border:1px solid #c6c6c6;border-bottom:none"></div>
<svg style="left:60px;top:740px" width="17" height="17" viewBox="0 0 17 17"><circle cx="10.5" cy="6.5" r="5.3" fill="none" stroke="#1f1f1f" stroke-width="1.3"/><path d="M6.8 10.2L.8 16.2" stroke="#1f1f1f" stroke-width="1.5"/></svg>
<div class="t" style="left:88px;top:740px;font-size:14.3px;color:#202020">Type here to search</div>
<!-- iguana -->
<svg style="left:256px;top:731px" width="80" height="37" viewBox="0 0 80 37">
<defs><linearGradient id="wat" x1="0" y1="0" x2="0" y2="1"><stop offset="0" stop-color="#8ad8fa"/><stop offset="1" stop-color="#0a78dc"/></linearGradient>
<linearGradient id="rock" x1="1" y1="0" x2="0" y2="1"><stop offset="0" stop-color="#d8efe6"/><stop offset=".5" stop-color="#9cc9ae"/><stop offset="1" stop-color="#1e6a2a"/></linearGradient>
<linearGradient id="ig" x1="0" y1="0" x2="1" y2="1"><stop offset="0" stop-color="#e9c892"/><stop offset=".6" stop-color="#cfa478"/><stop offset="1" stop-color="#a87a52"/></linearGradient></defs>
<path d="M3 37 Q0 33 4 31 Q1 28 8 25.5 Q6 23 14 22.5 L30 21 Q34 16 42 16 L64 16 Q68 17.5 62 19 Q66 21.5 74 23 Q76 25 70 27 Q80 30 79 34 L79 37Z" fill="url(#wat)"/>
<ellipse cx="33" cy="34" rx="20" ry="8.5" fill="url(#rock)"/>
<path d="M12 8 Q12 2 20 1.5 Q28 1 30 6 Q31 9 27 11 Q31 12 36 15 Q46 19 52 23 Q62 28 72 31 Q80 33 79 34.5 Q70 35 60 33.5 Q50 32 44 31 L43 35 L38 35.5 L38 30 Q32 28 29 27 L25 32.5 L19.5 32.5 L21 26 Q17 24 15 22 L16 29.5 L12.5 29.5 L12 20 Q11 14 12 8Z" fill="url(#ig)"/>
<path d="M12.5 13 Q13.5 20 20 26 Q23 27.5 21 22 Q18 17 12.5 13Z" fill="#6e3f28" opacity=".85"/>
<path d="M46 31 Q60 34 79 34.5 Q66 33 52 30Z" fill="#7a4a30" opacity=".7"/>
<path d="M11 4 L14 5 M10.5 7 L13 7.5 M11 10 L13 10 M13 2 L15 4 M30 11 L32 9.5 M34 13 L36 11.5 M38 15 L40 13.5 M42 17 L44 15.5" stroke="#d8b080" stroke-width="1"/>
<circle cx="20" cy="5" r="3" fill="#e8a0a0" opacity=".5"/>
<path d="M26 5 Q28.5 4.5 30 6 Q28 7 26 6.5Z" fill="#d02040"/>
<circle cx="21.5" cy="3.5" r=".9" fill="#3a2a20"/>
<circle cx="23" cy="21" r="3.5" fill="#e0a890" opacity=".45"/><circle cx="35" cy="24" r="4" fill="#e0a890" opacity=".45"/>
</svg>
<!-- task view -->
<svg style="left:352px;top:740px" width="17" height="15" viewBox="0 0 17 15"><path d="M0 .5H11M0 14.5H11M1.5 3.5H9.5V11.5H1.5Z M14.5 0V1.5M14.5 11V15" fill="none" stroke="#000" stroke-width="1.2"/><rect x="13" y="4.5" width="3" height="3" fill="#000"/></svg>
<!-- notepad -->
<svg style="left:399px;top:737px" width="23" height="22" viewBox="0 0 23 22"><defs><linearGradient id="np" x1="0" y1="0" x2="1" y2="1"><stop offset="0" stop-color="#d8f2fb"/><stop offset=".6" stop-color="#6fc0e0"/><stop offset="1" stop-color="#2a8ab8"/></linearGradient></defs><path d="M6 1 L20 3 L22 20 L2 19 Z" fill="#e8e8e8" stroke="#9a9a9a" stroke-width=".8"/><path d="M6 1 L19 3 L15 19 L1 17 Z" fill="url(#np)"/><path d="M7 1 L19 2.5" stroke="#8a8a8a" stroke-width="1.6"/></svg>
<!-- explorer -->
<svg style="left:449px;top:739px" width="22" height="18" viewBox="0 0 22 18"><path d="M0 1.5 Q0 0 1.5 0 H8 L10 2 H20.5 Q22 2 22 3.5 V16.5 Q22 18 20.5 18 H1.5 Q0 18 0 16.5Z" fill="#f9c63f"/><path d="M0 3 H22" stroke="#e9a81f" stroke-width="1.5"/><path d="M5 18 V10.5 H17 V18 H13.5 V13.5 H8.5 V18Z" fill="#1e78c8"/></svg>
<!-- filezilla -->
<div class="a" style="left:497px;top:736px;width:24px;height:24px;background:#bf0000;outline:1px dotted #7a0000;outline-offset:-1px"></div>
<div class="t" style="left:500px;top:736px;font-size:21px;font-style:italic;font-weight:bold;color:#fff;letter-spacing:-1px">Fz</div>
<div class="a" style="left:489px;top:766px;width:40px;height:2px;background:#0b6fcf"></div>
<!-- edge -->
<svg style="left:545px;top:736px" width="25" height="24" viewBox="0 0 25 24"><defs><linearGradient id="eg1" x1="0" y1="0" x2="1" y2="1"><stop offset="0" stop-color="#35c1f1"/><stop offset="1" stop-color="#0c59a4"/></linearGradient><linearGradient id="eg2" x1="0" y1="0" x2="1" y2="0"><stop offset="0" stop-color="#35c1f1"/><stop offset="1" stop-color="#66eb6e"/></linearGradient></defs><path d="M12.5 0 A12 12 0 0 1 24.5 11.5 Q24.5 16 19 16 Q13 16 15 11.5 Q16 8 11 7.5 Q5 7.5 2 13 Q1 4 12.5 0Z" fill="url(#eg2)"/><path d="M2 13 Q5 7.5 11 7.5 Q8 10 8.5 14 Q9.5 22 20 21 Q17 24 12.5 24 Q2 24 1 14Z" fill="url(#eg1)"/></svg>
<!-- xampp -->
<svg style="left:595px;top:736px" width="24" height="24" viewBox="0 0 24 24"><rect x="0" y="0" width="24" height="24" rx="4" fill="#f17b21"/><g fill="#fff"><circle cx="7.9" cy="8.7" r="4.7"/><circle cx="16.5" cy="8.7" r="4.7"/><circle cx="7.9" cy="14.6" r="4.7"/><circle cx="16.5" cy="14.6" r="4.7"/><rect x="8" y="9" width="8.5" height="5.5"/></g><g fill="#f17b21"><circle cx="7.9" cy="8.7" r="1.6"/><circle cx="16.5" cy="8.7" r="1.6"/><circle cx="7.9" cy="14.6" r="1.6"/><circle cx="16.5" cy="14.6" r="1.6"/><rect x="6.6" y="8.7" width="2.6" height="5.9"/><rect x="15.2" y="8.7" width="2.6" height="5.9"/><rect x="7.9" y="10.4" width="8.6" height="2.6"/></g></svg>
<div class="a" style="left:587px;top:766px;width:40px;height:2px;background:#0b6fcf"></div>
<!-- vscode -->
<svg style="left:644px;top:736px" width="25" height="25" viewBox="0 0 25 25"><path d="M18 0.5 L24.5 3.5 V21.5 L18 24.5 L7 14.5 L2.5 18 L0.5 17 V8 L2.5 7 L7 10.5Z M18 7 L11 12.5 L18 18Z" fill="#1f9cf0"/><path d="M18 0.5 L24.5 3.5 V21.5 L18 24.5Z" fill="#0065a9" opacity=".6"/></svg>
<div class="a" style="left:636px;top:766px;width:40px;height:2px;background:#0b6fcf"></div>
<!-- chrome active -->
<div class="a" style="left:681px;top:728px;width:48px;height:40px;background:#f0f5f5"></div>
<svg style="left:692px;top:736px" width="27" height="25" viewBox="0 0 27 25"><circle cx="12" cy="12" r="11.5" fill="#db4437"/><path d="M12 12 L22 6.25 A11.5 11.5 0 0 1 12 23.5Z" fill="#f4c20d"/><path d="M12 12 L12 23.5 A11.5 11.5 0 0 1 2 6.25Z" fill="#0f9d58"/><circle cx="12" cy="12" r="5.5" fill="#fff"/><circle cx="12" cy="12" r="4.3" fill="#4285f4"/><circle cx="20" cy="18" r="6.5" fill="#f0a846"/><path d="M15 16 Q16.5 21 20 21 Q23.5 21 25 16 Q23 17 22 14.5 Q21 12 20 12 Q19 12 18 14.5 Q17 17 15 16Z" fill="#233a8a"/><ellipse cx="20" cy="15" rx="1.8" ry="1.5" fill="#e8e8f0"/></svg>
<div class="a" style="left:681px;top:766px;width:48px;height:2px;background:#0b6fcf"></div>
<!-- whatsapp -->
<svg style="left:742px;top:736px" width="24" height="24" viewBox="0 0 24 24"><path d="M12 1.2 A10.8 10.8 0 1 1 6.5 21.3 L1 23 L2.8 17.8 A10.8 10.8 0 0 1 12 1.2Z" fill="none" stroke="#1f8c3c" stroke-width="2"/><path d="M8 6.5 Q9.5 6 10 7.5 L10.8 9.5 Q10.5 10.5 9.8 11 Q11 13.8 13.5 14.5 Q14 13.8 14.8 13.5 L17 14.5 Q17.5 16.5 15.5 17 Q12 17.5 9 14 Q6 10.5 7 8Z" fill="#1f8c3c"/></svg>
<div class="a" style="left:734px;top:766px;width:40px;height:2px;background:#0b6fcf"></div>
<!-- skype -->
<svg style="left:792px;top:736px" width="22" height="22" viewBox="0 0 22 22"><path d="M6 .5 Q8.5 .5 10 1.5 A10 10 0 0 1 20.5 12 Q21.5 13.5 21.5 16 A5.5 5.5 0 0 1 12 20.5 A10 10 0 0 1 1.5 10 Q.5 8.5 .5 6 A5.5 5.5 0 0 1 6 .5Z" fill="#1a9bea"/><text x="11" y="16.5" text-anchor="middle" font-family="Liberation Sans" font-weight="bold" font-size="15" fill="#fff">S</text></svg>
<div class="a" style="left:783px;top:766px;width:40px;height:2px;background:#0b6fcf"></div>
<!-- github -->
<svg style="left:840px;top:736px" width="24" height="24" viewBox="0 0 24 24"><circle cx="11.8" cy="11.5" r="11" fill="#7d31b5"/><circle cx="11.8" cy="11.5" r="8" fill="#f3eef8"/><path d="M7.5 8 L7.8 5.5 Q9 5.8 10 6.6 Q11.8 6.2 13.6 6.6 Q14.6 5.8 15.8 5.5 L16.1 8 Q16.6 9 16.6 10.5 Q16.6 13.8 13.8 14.3 Q14 15 14 16 V20 Q11.8 20.8 9.6 20 V16 Q9.6 15 9.8 14.3 Q7 13.8 7 10.5 Q7 9 7.5 8Z" fill="#7d31b5"/><path d="M5.5 14.5 Q7 15 8 16.5 Q8.8 17.3 9.6 17" fill="none" stroke="#7d31b5" stroke-width="1"/></svg>
<div class="a" style="left:832px;top:766px;width:40px;height:2px;background:#0b6fcf"></div>
<!-- kom -->
<svg style="left:976px;top:736px" width="19" height="24" viewBox="0 0 19 24"><path d="M2 0 H13 L19 6 V22 Q19 24 17 24 H2 Q0 24 0 22 V2 Q0 0 2 0Z" fill="#3aa4ee"/><path d="M13 0 V6 H19Z" fill="#a8dcfb"/><rect x="2.5" y="9" width="3" height="6" fill="#1565b8"/><rect x="8" y="12" width="3" height="3" fill="#1565b8"/><rect x="13.5" y="10" width="3" height="5" fill="#1565b8"/><path d="M2.5 17H16.5M2.5 20.5H16.5" stroke="#e3f3fd" stroke-width="1.4"/></svg>
<div class="t" style="left:1005px;top:740px;font-size:14px;color:#000">Kom...</div>
<svg style="left:1069px;top:744px" width="13" height="8" viewBox="0 0 13 8"><path d="M.5 7.5L6.5 1L12.5 7.5" fill="none" stroke="#000" stroke-width="1.3"/></svg>
<svg style="left:1092px;top:744px" width="15" height="9" viewBox="0 0 15 9"><rect x=".6" y=".6" width="12.3" height="7.8" fill="none" stroke="#000" stroke-width="1.2"/><rect x="2.5" y="2.5" width="5.5" height="4" fill="#000"/><rect x="13.3" y="3" width="1.5" height="3" fill="#000"/></svg>
<svg style="left:1117px;top:740px" width="13" height="16" viewBox="0 0 13 16"><rect x="1" y="4.5" width="7.5" height="7" rx="1.5" fill="none" stroke="#000" stroke-width="1.2"/><path d="M8.5 7 L12 5 V11 L8.5 9" fill="none" stroke="#000" stroke-width="1.2"/><path d="M2 2 Q5 0 8 2 M2 14 Q5 16 8 14" fill="none" stroke="#000" stroke-width="1"/></svg>
<svg style="left:1141px;top:740px" width="12" height="16" viewBox="0 0 12 16"><rect x="3" y="0" width="6" height="10.5" rx="3" fill="#000"/><path d="M1 7 Q1 12.5 6 12.5 Q11 12.5 11 7 M6 12.5V15.5M3 15.5H9" fill="none" stroke="#000" stroke-width="1.1"/></svg>
<svg style="left:1165px;top:742px" width="14" height="14" viewBox="0 0 14 14"><path d="M1 13 A12 12 0 0 1 13 1 M4 13 A9 9 0 0 1 13 4 M7 13 A6 6 0 0 1 13 7" fill="none" stroke="#000" stroke-width="1.2"/><circle cx="11.5" cy="11.5" r="1.6" fill="#000"/></svg>
<svg style="left:1186px;top:741px" width="18" height="14" viewBox="0 0 18 14"><path d="M1 4.5H4L8 1V13L4 9.5H1Z" fill="none" stroke="#000" stroke-width="1.2"/><path d="M10.5 4.5Q12 7 10.5 9.5M13 2.5Q15.5 7 13 11.5" fill="none" stroke="#000" stroke-width="1.1"/><path d="M15.5 .5Q19 7 15.5 13.5" fill="none" stroke="#888" stroke-width="1"/></svg>
<div class="t" style="left:1213px;top:742px;font-size:11.2px;color:#000">ENG</div>
<div class="t" style="left:1257px;top:733.5px;font-size:11.5px;color:#000">2:07 am</div>
<div class="t" style="left:1250px;top:750.5px;font-size:11.5px;color:#000">13/02/2025</div>
<svg style="left:1325px;top:740px" width="16" height="15" viewBox="0 0 16 15"><path d="M0 0H16V11H7L4 14V11H0Z" fill="#000"/><path d="M3 3H13M3 5.5H13M3 8H10" stroke="#fff" stroke-width="1"/></svg>
<div class="a" style="left:1331px;top:747px;width:19px;height:19px;border-radius:50%;background:#c8c8c8;border:1px solid #7a7a7a"></div>
<div class="t" style="left:1333px;top:749px;font-size:13px;color:#000;letter-spacing:-0.5px">10</div>
<div class="a" style="left:1361px;top:728px;width:1px;height:40px;background:#9aaba2"></div>
</body></html>
